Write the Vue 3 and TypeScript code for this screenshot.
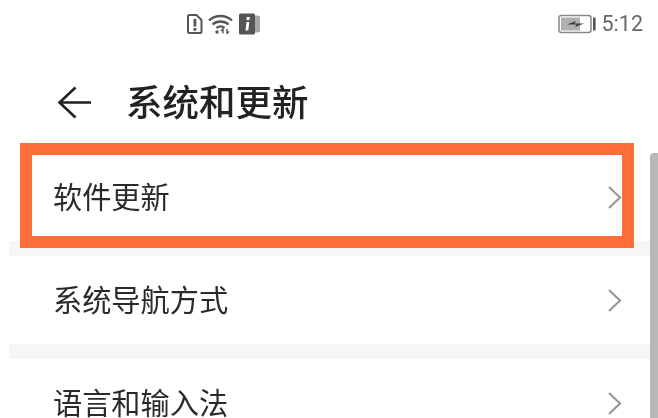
<template>
  <div class="screen">
    <div class="status-bar">
      <div class="status-left">
        <svg class="icon-sim" width="16" height="20" viewBox="0 0 16 20">
          <path d="M2.500 1h7l5 5v11.500a1.500 1.500 0 0 1-1.500 1.500H2.500A1.500 1.500 0 0 1 1 17.500v-15A1.500 1.500 0 0 1 2.500 1z" fill="none" stroke="#555" stroke-width="2" />
          <rect x="6.500" y="5" width="2.800" height="7.500" fill="#555" />
          <rect x="6.500" y="14" width="2.800" height="2.800" fill="#555" />
        </svg>
        <svg class="icon-wifi" width="26" height="20" viewBox="0 0 26 20">
          <path d="M1 6.500C7.500 .5 17.500 .5 24 6.500M4.500 10.500c4.500-4 11.500-4 16 0M8.500 14c2.500-2 5.500-2 8 0" fill="none" stroke="#555" stroke-width="2.300" />
          <circle cx="9" cy="18" r="1.700" fill="#555" />
          <path d="M15 19.500v-4.500l-2 2M19 15v4.500l2-2" fill="none" stroke="#555" stroke-width="1.400" />
        </svg>
        <svg class="icon-info" width="21" height="22" viewBox="0 0 21 22">
          <rect x="12" y="2.500" width="9" height="17" rx="2" fill="#a8a8a8" />
          <rect x="0" y="0.500" width="16" height="21" rx="1.500" fill="#555" />
          <path d="M7.800 4h3l-.4 3h-3zM7.500 9h2.800l-1 8.500H6.500z" fill="#fff" />
        </svg>
      </div>
      <div class="status-right">
        <svg class="icon-battery" width="38" height="20" viewBox="0 0 38 20">
          <rect x="1" y="1.500" width="32" height="17" rx="2.500" fill="#fff" stroke="#888" stroke-width="1.500" />
          <rect x="3" y="3.500" width="19" height="13" fill="#b0b0b0" />
          <path d="M9 10.500l9-3.500-1.500 2.500H26l-9 3.500 1.500-2.500z" fill="#3c3c3c" />
          <rect x="35" y="3.500" width="2.600" height="13" fill="#555" />
        </svg>
        <span class="time">5:12</span>
      </div>
    </div>

    <div class="header">
      <svg class="back" width="36" height="36" viewBox="0 0 36 36">
        <path d="M19.500 2.500L3.500 17.500l16 15M3.500 17.500H35" fill="none" stroke="#222" stroke-width="2.600" />
      </svg>
      <h1 class="title">系统和更新</h1>
    </div>

    <div class="list">
      <template v-for="(item, i) in items" :key="item">
        <div class="row">
          <span class="label">{{ item }}</span>
          <svg class="chevron" width="15" height="25" viewBox="0 0 15 25">
            <path d="M2 2l11 10.500L2 23" fill="none" stroke="#999" stroke-width="2.200" />
          </svg>
          <div v-if="i === 0" class="highlight"></div>
        </div>
        <div v-if="i < items.length - 1" class="divider"></div>
      </template>
    </div>

    <div class="scrollbar"></div>
  </div>
</template>

<script setup lang="ts">
const items: string[] = ['软件更新', '系统导航方式', '语言和输入法']
</script>

<style>
html,
body {
  margin: 0;
  background: #fff;
  overflow: hidden;
}
</style>

<style scoped>
.screen {
  position: relative;
  width: 658px;
  height: 418px;
  overflow: hidden;
  background: #fff;
  font-family: "Liberation Sans", "Noto Sans CJK SC", sans-serif;
  filter: blur(0.5px);
}

.status-bar {
  display: flex;
  justify-content: space-between;
  align-items: center;
  height: 47px;
  padding: 0 15px 0 187px;
  box-sizing: border-box;
}

.status-left,
.status-right {
  display: flex;
  align-items: center;
}

.status-left {
  gap: 5px;
}

.status-right {
  gap: 6px;
}

.time {
  font-family: Roboto, sans-serif;
  font-size: 21.5px;
  color: #666;
}

.header {
  display: flex;
  align-items: center;
  height: 106px;
  padding: 6px 0 0 56px;
  box-sizing: border-box;
}

.back {
  margin-right: 34px;
}

.title {
  margin: 2px 0 0;
  font-size: 36.5px;
  font-weight: 500;
  color: #222;
  line-height: 1;
}

.list {
  margin: 0 8px 0 9px;
}

.row {
  position: relative;
  display: flex;
  justify-content: space-between;
  align-items: center;
  height: 88px;
  padding: 0 28px 0 44px;
}

.label {
  padding-top: 3px;
  font-size: 29.2px;
  color: #2a2a2a;
  line-height: 1;
}

.divider {
  height: 15px;
  background: #f6f6f6;
}

.highlight {
  position: absolute;
  top: -10px;
  bottom: -7px;
  left: 11px;
  right: 16px;
  border: 12px solid #ff6d3b;
}

.scrollbar {
  position: absolute;
  top: 153px;
  bottom: 0;
  right: 0;
  width: 8px;
  border-radius: 4px 0 0 0;
  background: #b8b8b8;
}
</style>
